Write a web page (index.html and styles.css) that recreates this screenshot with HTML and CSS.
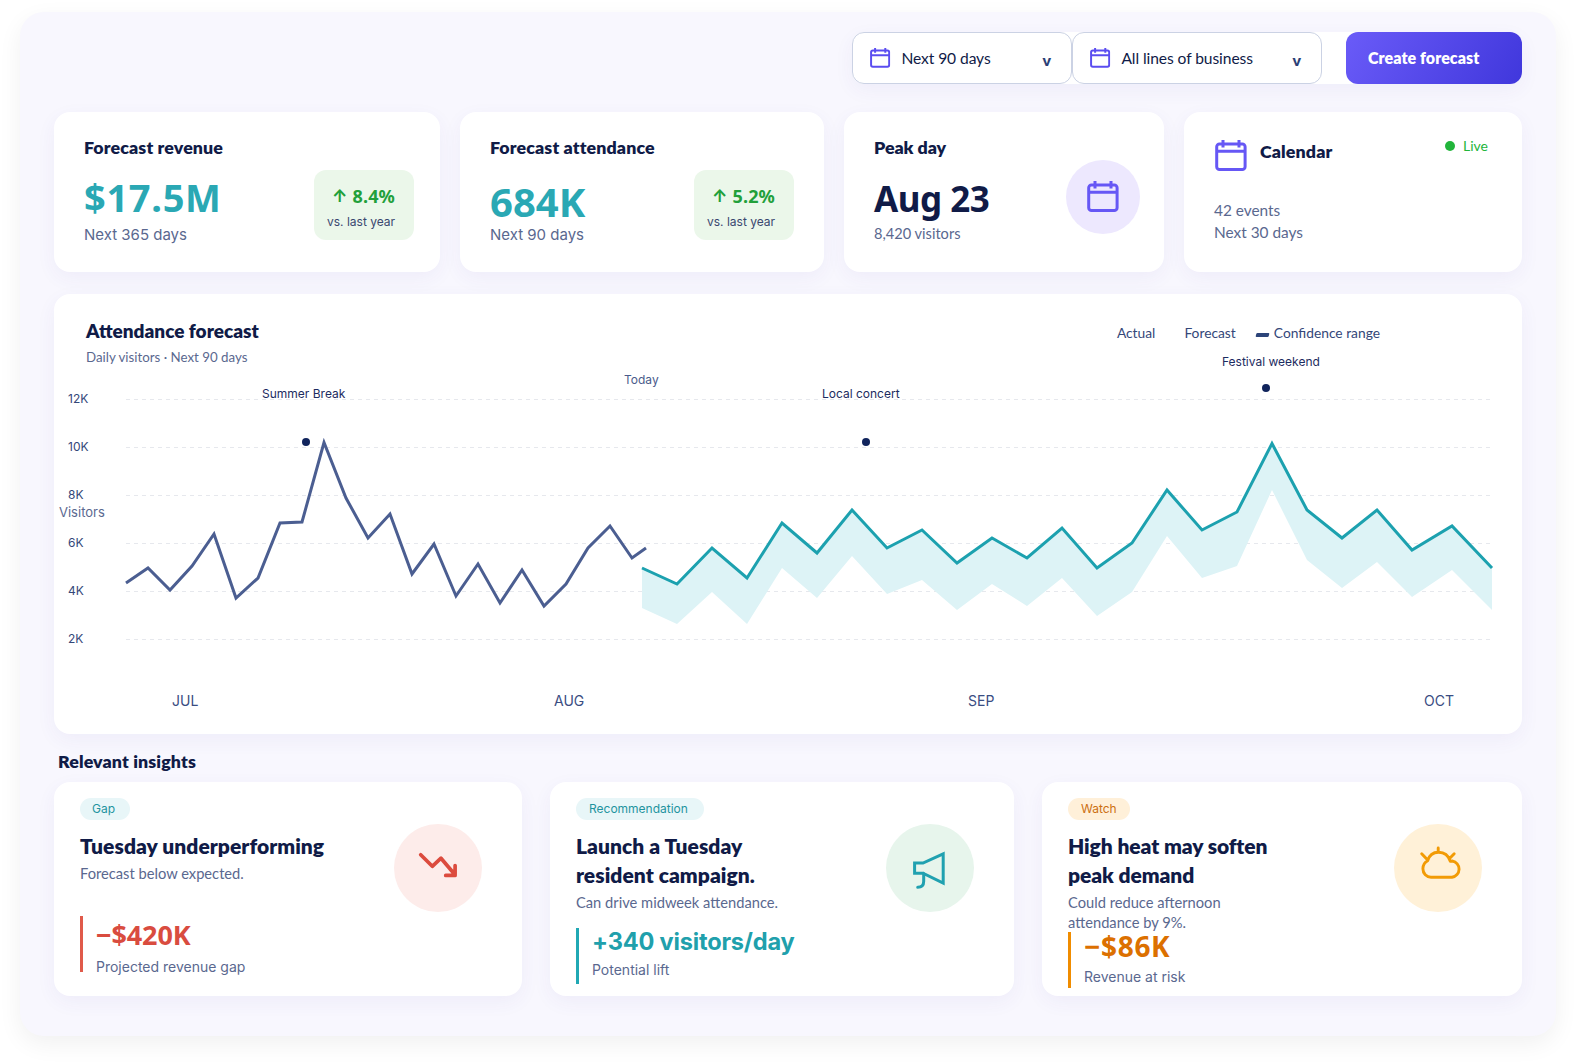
FILE: index.html
```html
<!DOCTYPE html>
<html lang="en">
<head>
<meta charset="utf-8">
<title>Attendance forecast</title>
<link rel="stylesheet" href="styles.css">
</head>
<body>
<svg class="defs" width="0" height="0" aria-hidden="true">
  <symbol id="calendar" viewBox="0 0 32 32">
    <rect x="1.7" y="3.9" width="28.4" height="25.6" rx="2.8"/>
    <path d="M1.7 11.3h28.4M8 0v7.6M24 0v7.6"/>
  </symbol>
</svg>

<main class="panel">
  <header class="controls">
    <div class="select select-range"><svg class="cal cal-sm"><use href="#calendar"/></svg><span>Next 90 days</span><b class="caret">v</b></div>
    <div class="select select-business"><svg class="cal cal-sm"><use href="#calendar"/></svg><span>All lines of business</span><b class="caret">v</b></div>
    <button class="create" type="button">Create forecast</button>
  </header>

  <section class="kpis">
    <article class="card kpi">
      <div class="kpi-main">
        <h2 class="title">Forecast revenue</h2>
        <p class="value value-revenue">$17.5M</p>
        <p class="period">Next 365 days</p>
      </div>
      <div class="delta"><p class="delta-value"><span class="arrow">↑</span><span class="delta-number">8.4%</span></p><p class="delta-note">vs. last year</p></div>
    </article>
    <article class="card kpi kpi-attendance">
      <div class="kpi-main">
        <h2 class="title">Forecast attendance</h2>
        <p class="value value-attendance">684K</p>
        <p class="period">Next 90 days</p>
      </div>
      <div class="delta"><p class="delta-value"><span class="arrow">↑</span><span class="delta-number">5.2%</span></p><p class="delta-note">vs. last year</p></div>
    </article>
    <article class="card kpi kpi-peak">
      <div class="kpi-main">
        <h2 class="title">Peak day</h2>
        <p class="value value-peak">Aug 23</p>
        <p class="visitors">8,420 visitors</p>
      </div>
      <div class="peak-icon"><svg class="cal cal-lg"><use href="#calendar"/></svg></div>
    </article>
    <article class="card calendar">
      <div class="calendar-head">
        <svg class="cal cal-lg"><use href="#calendar"/></svg>
        <h2 class="title calendar-title">Calendar</h2>
        <span class="live"><i class="live-dot"></i>Live</span>
      </div>
      <p class="calendar-text">42 events<br>Next 30 days</p>
    </article>
  </section>

  <section class="card forecast">
    <div class="forecast-head">
      <div>
        <h2 class="forecast-title">Attendance forecast</h2>
        <p class="forecast-sub">Daily visitors · Next 90 days</p>
      </div>
      <div class="legend"><span>Actual</span><span class="legend-forecast">Forecast</span><i class="legend-mark"></i><span>Confidence range</span></div>
    </div>
    <svg class="chart" viewBox="54 354 1468 380">
      <g class="grid">
        <path d="M126 399.5H1492M126 447.5H1492M126 495.5H1492M126 543.5H1492M126 591.5H1492M126 639.5H1492"/>
      </g>
      <polygon class="band" points="642,568 677,584 712,548 747,578 782,523 817,553 852,510 887,548 922,530 957,563 992,538 1027,558 1062,528 1097,568 1132,543 1167,490 1202,530 1237,512 1272,443.5 1307,510 1342,538 1377,510 1412,550 1452,526 1492,568 1492,610 1452,570 1412,597 1377,562 1342,588 1307,560 1272,490 1237,566 1202,578 1167,536 1132,592 1097,616 1062,578 1027,606 992,584 957,610 922,580 887,594 852,556 817,598 782,568 747,624 712,592 677,624 642,608"/>
      <polyline class="line actual" points="126,583 148,568 170,590 192,566 214,534 236,598 258,578 280,523 302,522 324,442.5 346,498 368,538 390,514 412,574 434,544 456,596 478,564 500,603 522,570 544,606 566,584 588,548 610,526 632,558 646,548"/>
      <polyline class="line predicted" points="642,568 677,584 712,548 747,578 782,523 817,553 852,510 887,548 922,530 957,563 992,538 1027,558 1062,528 1097,568 1132,543 1167,490 1202,530 1237,512 1272,443.5 1307,510 1342,538 1377,510 1412,550 1452,526 1492,568"/>
      <g class="dots"><circle cx="306" cy="442" r="4"/><circle cx="866" cy="442" r="4"/><circle cx="1266" cy="388" r="4"/></g>
      <g class="event">
        <text x="262" y="398">Summer Break</text>
        <text x="822" y="398">Local concert</text>
        <text x="1222" y="366">Festival weekend</text>
      </g>
      <text class="today" x="624" y="384">Today</text>
      <g class="ticks">
        <text x="68" y="403">12K</text><text x="68" y="451">10K</text><text x="68" y="499">8K</text>
        <text x="68" y="547">6K</text><text x="68" y="595">4K</text><text x="68" y="643">2K</text>
      </g>
      <text class="axis-name" x="59" y="517">Visitors</text>
      <g class="months">
        <text x="172" y="706">JUL</text><text x="554" y="706">AUG</text><text x="968" y="706">SEP</text><text x="1424" y="706">OCT</text>
      </g>
    </svg>
  </section>

  <h2 class="title insights-title">Relevant insights</h2>
  <section class="insights">
    <article class="card insight gap">
      <div class="insight-main">
        <span class="tag">Gap</span>
        <h3 class="insight-name">Tuesday underperforming</h3>
        <p class="insight-text">Forecast below expected.</p>
        <div class="metric"><p class="metric-value">−$420K</p><p class="metric-label">Projected revenue gap</p></div>
      </div>
      <svg class="badge" viewBox="0 0 88 88"><circle class="badge-bg" cx="44" cy="44" r="44"/><path d="M26.7 30.7l11.6 11.6L47 34.2l14 16.6M61.1 41.6v9.8h-9.4"/></svg>
    </article>
    <article class="card insight recommendation">
      <div class="insight-main">
        <span class="tag">Recommendation</span>
        <h3 class="insight-name">Launch a Tuesday<br>resident campaign.</h3>
        <p class="insight-text">Can drive midweek attendance.</p>
        <div class="metric"><p class="metric-value">+340 visitors/day</p><p class="metric-label">Potential lift</p></div>
      </div>
      <svg class="badge" viewBox="0 0 88 88"><circle class="badge-bg" cx="44" cy="44" r="44"/><path d="M28.6 39H37l20.2-9.1v29.2L37 49.2h-8.4zM37.7 49.2v8c0 4-2 6-6 6"/></svg>
    </article>
    <article class="card insight watch">
      <div class="insight-main">
        <span class="tag">Watch</span>
        <h3 class="insight-name">High heat may soften<br>peak demand</h3>
        <p class="insight-text">Could reduce afternoon<br>attendance by 9%.</p>
        <div class="metric"><p class="metric-value">−$86K</p><p class="metric-label">Revenue at risk</p></div>
      </div>
      <svg class="badge" viewBox="0 0 88 88"><circle class="badge-bg" cx="44" cy="44" r="44"/><path d="M37 53.2h21a8.2 8.2 0 0 0 .3-16.2l-2 .2C54.5 31.5 50 28.2 44.5 28.2S35 31.8 33.6 36.8C30.6 38.5 28.9 41.3 28.9 44.8c0 4.8 3.6 8.4 8.1 8.4zM44.2 24v4M27.7 29.7l6 6.3M60.2 29.7L56 34"/></svg>
    </article>
  </section>
</main>
</body>
</html>
```

FILE: styles.css
```css
* { box-sizing: border-box; }
body { margin: 0; padding: 12px 20px 28px; background: #fff; color: #101b47; font-family: Lato, "Noto Sans", sans-serif; }
h2, h3, p { margin: 0; }
.defs { display: block; }
.panel { height: 1024px; padding: 20px 34px 0; border-radius: 24px; background: #f8f7fe; box-shadow: 0 8px 24px rgba(0, 0, 0, .06); }
.card { border-radius: 16px; background: #fff; box-shadow: 0 6px 20px rgba(80, 60, 170, .055); }

.cal { display: block; flex: none; overflow: visible; fill: none; stroke: #6657f5; stroke-width: 3; }
.cal-sm { width: 20.4px; height: 20.4px; stroke: #5b4df0; stroke-width: 3.1; }
.cal-lg { width: 32px; height: 32px; }

/* Toolbar */
.controls { display: flex; width: 670px; height: 52px; margin-left: auto; border-radius: 12px; background: #fff; box-shadow: 0 6px 20px rgba(80, 60, 170, .055); }
.select { display: flex; align-items: center; padding: 0 20px 0 17px; border: 1px solid #cbd2e4; border-radius: 12px; background: #fff; font-size: 15.6px; }
.select span { margin: 0 auto 0 11px; padding-bottom: 1px; letter-spacing: -.08px; }
.select-range { width: 220px; }
.select-business { width: 250px; }
.caret { padding-top: 3px; color: #2b3f76; font: 700 15px/20px "Noto Sans", sans-serif; }
.create { width: 176px; margin-left: auto; padding: 0 0 1px 22px; border: 0; border-radius: 12px; background: linear-gradient(120deg, #6a5bf8, #4037dc); color: #fff; font: 800 16px/20px Lato, sans-serif; letter-spacing: .06px; text-align: left; }

/* KPI row */
.kpis { display: grid; grid-template-columns: 386px 364px 320px 338px; gap: 20px; height: 160px; margin-top: 28px; }
.kpi { display: flex; justify-content: space-between; padding: 23px 26px 0 30px; }
.kpi-attendance { padding-right: 30px; }
.kpi-peak { padding-right: 24px; }
.title { font-size: 17.8px; line-height: 24px; font-weight: 800; letter-spacing: .12px; }
.kpi-peak .title { letter-spacing: -.05px; }
.value { color: #2aa8b4; font: 700 38px/46px "Noto Sans", sans-serif; }
.value-revenue { margin: 15px 0 4.5px; letter-spacing: .7px; }
.value-attendance { margin: 24px 0 5px; font-size: 40px; line-height: 37px; }
.value-peak { margin: 16.5px 0 2px; color: #101b47; font-size: 35px; letter-spacing: -.5px; }
.period { color: #5a688f; font: 15px/20px Inter, sans-serif; }
.visitors { color: #5a688f; font-size: 14.6px; line-height: 20px; }
.delta { width: 100px; height: 70px; margin-top: 35px; padding: 14px 0 0 13px; border-radius: 12px; background: #ebf7ea; }
.delta-value { display: flex; padding-left: 5px; color: #22a03a; font: 700 18px/24px "Noto Sans", sans-serif; }
.delta-number { letter-spacing: .15px; }
.arrow { width: 20.5px; font: 700 17px/24px Inter, sans-serif; }
.delta-note { margin-top: 6px; color: #3a4870; font: 12px/16px Inter, sans-serif; }
.peak-icon { display: grid; place-items: center; width: 74px; height: 74px; margin-top: 25px; border-radius: 50%; background: #ede8fe; }
.calendar { padding: 28px 34px 0 31px; }
.calendar-head { display: flex; align-items: flex-start; }
.calendar-title { margin: -1px 0 1px 13px; }
.live { display: flex; align-items: center; gap: 8px; margin: -4px 0 0 auto; color: #22b53b; font-size: 14px; line-height: 20px; }
.live-dot { width: 10px; height: 10px; border-radius: 50%; background: #22b53b; }
.calendar-text { margin: 27px 0 0 -1px; color: #5a688f; font-size: 15.4px; line-height: 22px; }

/* Chart */
.forecast { height: 440px; margin-top: 22px; padding-top: 24px; }
.forecast-head { display: flex; justify-content: space-between; padding: 0 142px 0 32px; }
.forecast-title { padding-top: 1px; font-size: 19px; line-height: 24px; font-weight: 800; }
.forecast-sub { margin-top: 4px; color: #5a688f; font-size: 13.3px; line-height: 20px; }
.legend { display: flex; height: 20px; margin-top: 5px; color: #344779; font-size: 13.8px; line-height: 20px; }
.legend-forecast { margin-left: 29px; }
.legend-mark { width: 13px; height: 4px; margin: 10px 5px 0 20px; border-radius: 1px; background: #2c4479; transform: skewX(-14deg); }
.chart { display: block; width: 1468px; height: 380px; margin-top: -13px; font-family: Inter, sans-serif; font-size: 12px; }
.grid { fill: none; stroke: #e6e8ed; stroke-dasharray: 4 4; }
.band { fill: #ddf3f6; }
.line { fill: none; stroke-width: 3; }
.actual { stroke: #4b5e91; }
.predicted { stroke: #1ca1af; }
.dots { fill: #10245c; }
.event { fill: #1c2b60; }
.ticks { fill: #344779; }
.today { fill: #4a5b8c; }
.axis-name { fill: #5a688f; font-size: 13px; }
.months { fill: #3a4d82; font-size: 14px; }

/* Insights */
.insights-title { margin: 15px 0 9px 4px; }
.insights { display: grid; grid-template-columns: 468px 464px 480px; gap: 28px; height: 214px; }
.insight { display: flex; justify-content: space-between; padding: 16px 40px 0 26px; }
.tag { display: block; width: 50px; height: 22px; padding-left: 12px; border-radius: 11px; background: #e8f6f8; color: #1f949f; font: 12px/22px Inter, sans-serif; }
.insight-name { margin-top: 10.5px; font-size: 21px; line-height: 29px; font-weight: 800; letter-spacing: .05px; }
.watch .insight-name { letter-spacing: -.08px; }
.insight-text { margin-top: 3px; color: #5a688f; font-size: 14.7px; line-height: 20px; }
.metric { height: 56px; margin-top: 33.5px; padding-left: 13px; border-left: 3px solid #e05a4a; }
.metric-value { color: #d94c3f; font: 700 27px/37px "Noto Sans", sans-serif; letter-spacing: -.15px; }
.metric-label { margin-top: 3.5px; color: #5a688f; font: 14px/20px Inter, sans-serif; }
.badge { flex: none; width: 88px; height: 88px; margin-top: 26px; fill: none; stroke: #dc4b3e; stroke-width: 3.7; stroke-linecap: round; stroke-linejoin: round; }
.badge-bg { fill: #fdecea; stroke: none; }
.recommendation .metric { margin-top: 16.5px; border-color: #20a8b4; }
.recommendation .tag { width: 128px; padding-left: 13px; }
.recommendation .metric-value { color: #20a0ac; font: 700 23.6px/27px Inter, sans-serif; letter-spacing: -.2px; }
.recommendation .metric-label { margin-top: 5px; }
.recommendation .badge { stroke: #20a1b0; stroke-width: 3; stroke-linejoin: miter; }
.recommendation .badge-bg { fill: #e7f5ec; stroke: none; }
.watch .tag { width: 62px; padding-left: 13px; background: #fff0d9; color: #cc6f12; }
.watch .metric { margin-top: .5px; border-color: #f08c00; }
.watch .metric-value { color: #dc7000; font-size: 28px; line-height: 29px; letter-spacing: .7px; }
.watch .metric-label { margin-top: 5.5px; }
.watch .badge { stroke: #f29b05; stroke-width: 2.9; }
.watch .badge-bg { fill: #fff1d8; }
```
